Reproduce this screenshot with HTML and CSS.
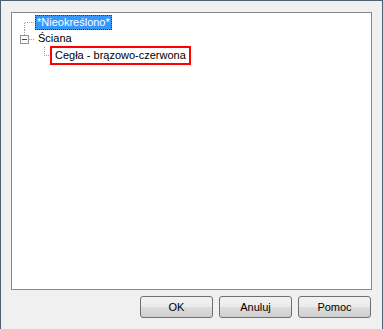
FILE: index.html
```html
<!DOCTYPE html>
<html>
<head>
<meta charset="utf-8">
<title>Wybór materiału</title>
<link rel="stylesheet" href="styles.css">
</head>
<body>

<div class="window">
  <div class="tree">
    <div class="row row-1">
      <svg class="lines" width="23" height="16">
        <path d="M12.5 8.5H23M12.5 8.5V16" />
      </svg>
      <span class="label selected">*Nieokreślono*</span>
    </div>
    <div class="row row-2">
      <svg class="lines" width="25" height="17">
        <path d="M12.5 0V5M17 9.5H23" />
        <rect class="box" x="8.5" y="5.5" width="8" height="8" />
        <path class="minus" d="M10 9.5H15" />
      </svg>
      <span class="label">Ściana</span>
    </div>
    <div class="row row-3">
      <svg class="lines" width="40" height="16">
        <path d="M32.5 0V8.5H38" />
      </svg>
      <span class="label marked">Cegła - brązowo-czerwona</span>
    </div>
  </div>

  <div class="buttons">
    <button>OK</button>
    <button>Anuluj</button>
    <button>Pomoc</button>
  </div>
</div>

</body>
</html>
```

FILE: styles.css
```css
body, html {
  margin: 0;
  height: 100%;
}

body {
  font-family: "Liberation Sans", Arial, sans-serif;
  font-size: 11px;
  color: #000;
}

.window {
  box-sizing: border-box;
  height: 329px;
  background: #f0f0f0;
  border: 1px solid #4f6072;
  border-bottom: none;
  padding: 11px 10px 0 10px;
}

.tree {
  box-sizing: border-box;
  height: 278px;
  background: #fff;
  border: 1px solid #828790;
}

.row {
  display: flex;
  align-items: center;
}
.row-1 {
  height: 16px;
  margin-top: 1px;
}
.row-2 {
  height: 17px;
}
.row-3 {
  height: 16px;
}

.lines {
  flex: none;
  align-self: stretch;
  shape-rendering: crispEdges;
}
.lines path {
  fill: none;
  stroke: #a0a0a0;
  stroke-dasharray: 1 1;
}
.lines .box {
  fill: #fbfbfb;
  stroke: #919191;
}
.lines path.minus {
  stroke: #2b4a7a;
  stroke-dasharray: none;
}

.label {
  white-space: nowrap;
  line-height: 13px;
  padding: 1px 2px;
}
.row-2 .label {
  padding-left: 1px;
}

.selected {
  background: #3399ff;
  color: #fff;
  border: 1px dotted #1a3a66;
  padding: 0 1px;
}

.marked {
  outline: 2px solid #ff0000;
  padding: 1px 3px;
}

.buttons {
  display: flex;
  justify-content: flex-end;
  gap: 6px;
  margin-top: 6px;
  padding-right: 1px;
}

.buttons button {
  width: 73px;
  height: 22px;
  font-family: inherit;
  font-size: 11px;
  color: #000;
  border: 1px solid #707070;
  border-radius: 3px;
  background: linear-gradient(#f2f2f2 0%, #ebebeb 50%, #dddddd 51%, #cfcfcf 100%);
  padding: 0;
}
```
